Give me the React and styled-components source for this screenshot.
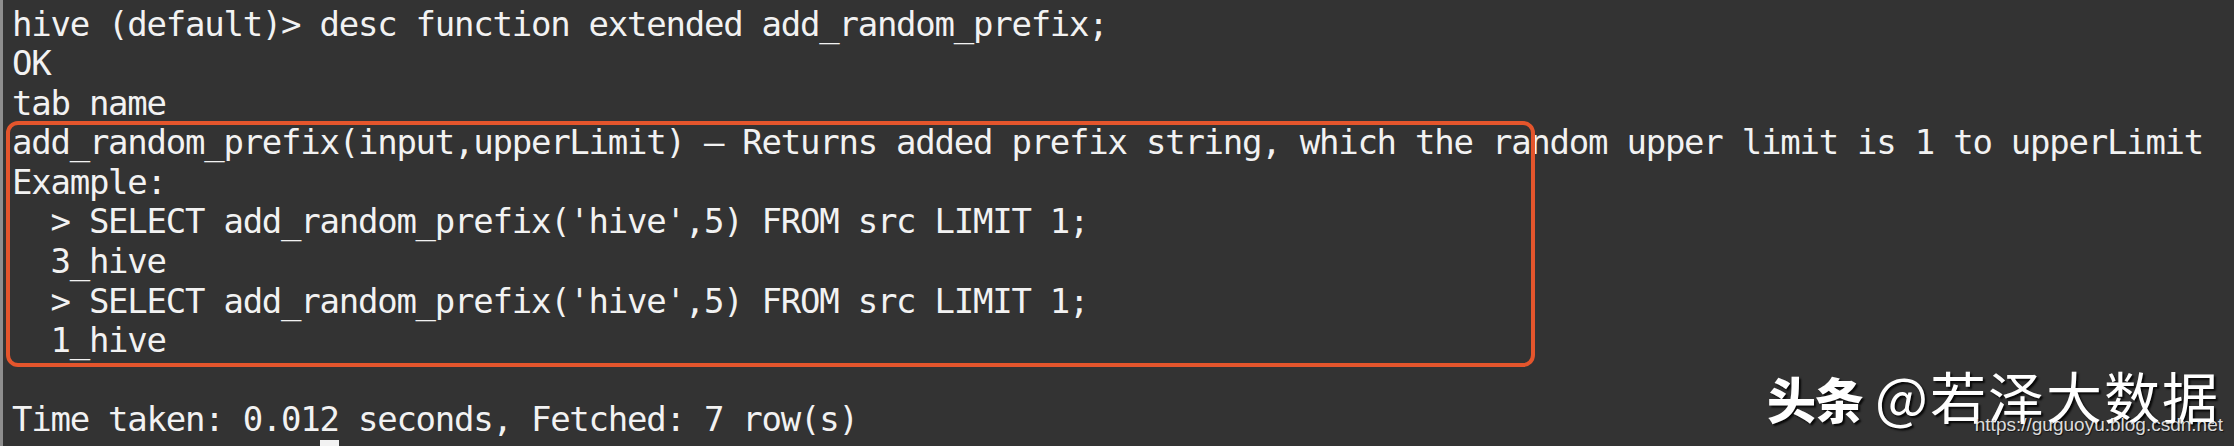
import React from "react";
import styled, { createGlobalStyle } from "styled-components";

const Global = createGlobalStyle`
  html, body { margin: 0; padding: 0; background: #333333; }
  body { overflow: hidden; }
`;

const Screen = styled.div`
  position: relative;
  width: 2234px;
  height: 446px;
  overflow: hidden;
  background: #333333;
  border-left: 3px solid #8e8e8e;
  box-sizing: border-box;
`;

const Terminal = styled.div`
  padding: 4.5px 0 0 9px;
  font-family: "DejaVu Sans Mono", "Liberation Mono", monospace;
  font-size: 34px;
  letter-spacing: -1.25px;
  line-height: 39.6px;
  color: #f2f2f2;
  white-space: pre;
`;

const Line = styled.div`
  height: 39.6px;
`;

const Highlight = styled.div`
  position: relative;
  &::after {
    content: "";
    position: absolute;
    top: -2px;
    bottom: -6px;
    left: -6px;
    width: 1529px;
    box-sizing: border-box;
    border: 4.5px solid #e4552c;
    border-radius: 12px;
    pointer-events: none;
  }
`;

const Cursor = styled.span`
  display: inline-block;
  width: 19px;
  height: 39.6px;
  background: #f2f2f2;
  vertical-align: top;
`;

const Watermark = styled.div`
  position: absolute;
  right: 14px;
  top: 354px;
  display: flex;
  align-items: baseline;
  font-family: "Noto Sans CJK SC", "Noto Sans", sans-serif;
  color: #ffffff;
  text-shadow: 2px 2px 2px rgba(0, 0, 0, 0.85);
`;

const Brand = styled.span`
  font-size: 49px;
  font-weight: 900;
  letter-spacing: -1px;
  margin-right: 12px;
`;

const Handle = styled.span`
  font-size: 56px;
  font-weight: 400;
  letter-spacing: 2px;
`;

const Url = styled.div`
  position: absolute;
  right: 11px;
  top: 414px;
  font-family: "Liberation Sans", Arial, sans-serif;
  font-size: 19px;
  color: rgba(255, 255, 255, 0.85);
  text-shadow: 1px 1px 1px rgba(0, 0, 0, 0.6);
`;

const before = ["hive (default)> desc function extended add_random_prefix;", "OK", "tab_name"];
const boxed = [
  "add_random_prefix(input,upperLimit) \u2013 Returns added prefix string, which the random upper limit is 1 to upperLimit",
  "Example:",
  "  > SELECT add_random_prefix('hive',5) FROM src LIMIT 1;",
  "  3_hive",
  "  > SELECT add_random_prefix('hive',5) FROM src LIMIT 1;",
  "  1_hive",
];
const after = ["", "Time taken: 0.012 seconds, Fetched: 7 row(s)"];

export default function App() {
  return (
    <>
      <Global />
      <Screen>
        <Terminal>
          {before.map((t, i) => (
            <Line key={"b" + i}>{t}</Line>
          ))}
          <Highlight>
            {boxed.map((t, i) => (
              <Line key={"h" + i}>{t}</Line>
            ))}
          </Highlight>
          {after.map((t, i) => (
            <Line key={"a" + i}>{t}</Line>
          ))}
          <Line>
            {" ".repeat(16)}
            <Cursor />
          </Line>
        </Terminal>
        <Watermark>
          <Brand>头条</Brand>
          <Handle>@若泽大数据</Handle>
        </Watermark>
        <Url>https://guguoyu.blog.csdn.net</Url>
      </Screen>
    </>
  );
}
